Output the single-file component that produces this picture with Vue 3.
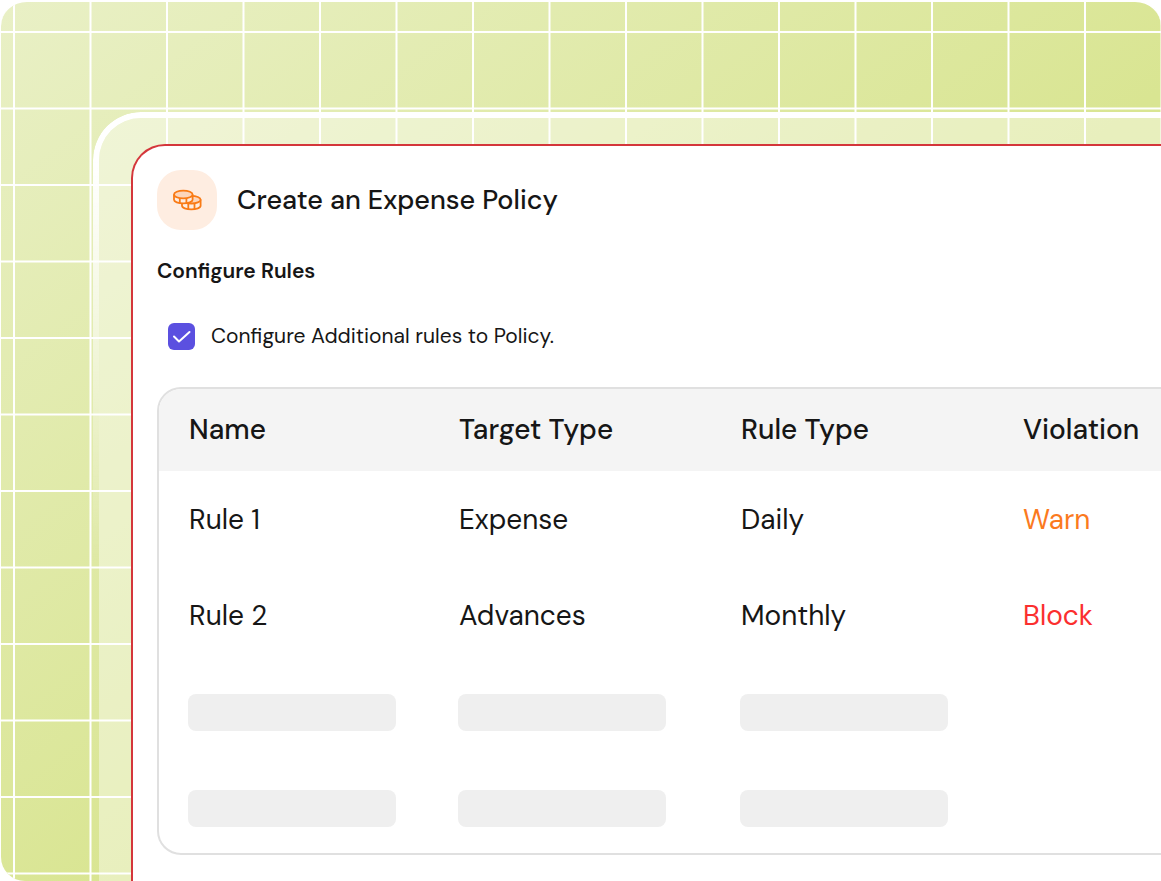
<script setup>
import { ref } from 'vue'

const additional = ref(true)
const columns = ['Name', 'Target Type', 'Rule Type', 'Violation']
const rules = [
  { name: 'Rule 1', target: 'Expense', type: 'Daily', violation: 'Warn', tone: 'warn' },
  { name: 'Rule 2', target: 'Advances', type: 'Monthly', violation: 'Block', tone: 'block' },
]
</script>

<template>
  <main class="stage">
    <svg class="grid" aria-hidden="true">
      <defs>
        <pattern id="lines" x="14" y="32" width="153" height="153" patternUnits="userSpaceOnUse">
          <path d="M0 0V153M76.5 0V153M153 0V153M0 0H153M0 76.5H153M0 153H153" stroke="#fff" stroke-width="2" />
        </pattern>
      </defs>
      <rect width="100%" height="100%" fill="url(#lines)" />
    </svg>
    <div class="glass">
      <section class="card">
        <header class="head">
          <span class="badge">
            <svg width="30" height="22" viewBox="0 0 30 22" fill="none" stroke="#f97b16" stroke-width="1.8" stroke-linejoin="round" aria-hidden="true">
              <path d="M10 10.500v6.300c0 2 4.200 3.500 9.300 3.500s9.300-1.500 9.300-3.500v-6.300" fill="#fdede2" />
              <ellipse cx="19.300" cy="10.700" rx="9.300" ry="3.800" fill="#fcd6bc" />
              <path d="M16.300 15v5M22.500 14.500v5.500" />
              <path d="M2 5.500v5.300c0 2 4.200 3.600 9.300 3.600s9.300-1.600 9.300-3.600V5.500" fill="#fdede2" />
              <path d="M7.800 9v5M14.400 9v5" />
              <ellipse cx="11.300" cy="5.500" rx="9.300" ry="3.900" fill="#fcd6bc" />
            </svg>
          </span>
          <h1>Create an Expense Policy</h1>
        </header>
        <h2>Configure Rules</h2>
        <label class="option">
          <span class="tick">
            <input v-model="additional" type="checkbox" />
            <svg v-if="additional" viewBox="0 0 27 27" aria-hidden="true">
              <path d="M6 13.500l5 5L21.500 9" fill="none" stroke="#fff" stroke-width="2" stroke-linecap="round" stroke-linejoin="round" />
            </svg>
          </span>
          <span>Configure Additional rules to Policy.</span>
        </label>
        <div class="frame">
          <table>
            <colgroup>
              <col class="first" />
              <col class="middle" />
              <col class="middle" />
              <col />
            </colgroup>
            <thead>
              <tr><th v-for="c in columns" :key="c" scope="col">{{ c }}</th></tr>
            </thead>
            <tbody>
              <tr v-for="r in rules" :key="r.name">
                <td>{{ r.name }}</td>
                <td>{{ r.target }}</td>
                <td>{{ r.type }}</td>
                <td :class="r.tone">{{ r.violation }}</td>
              </tr>
              <tr v-for="n in 2" :key="n" class="empty">
                <td v-for="m in 3" :key="m"><div class="bar"></div></td>
                <td></td>
              </tr>
            </tbody>
          </table>
        </div>
      </section>
    </div>
  </main>
</template>

<style>
body { background: #fff; }
</style>

<style scoped>
.stage {
  position: relative;
  display: flex;
  flex-direction: column;
  box-sizing: border-box;
  min-height: 100vh;
  margin-left: 1px;
  padding: 110px 0 0 92px;
  overflow: hidden;
  border-top: 2px solid #fff;
  border-radius: 26px 26px 0 24px;
  background: linear-gradient(to bottom right, #e9f0c6, #d9e592 55%, #d7e38c);
  font-family: "DM Sans", "Open Sans", sans-serif;
  color: #161616;
}
.grid {
  position: absolute;
  inset: -2px 0 0 -1px;
  width: calc(100% + 1px);
  height: calc(100% + 2px);
}
.glass {
  position: relative;
  display: flex;
  flex: 1;
  flex-direction: column;
  padding: 26px 0 0 32px;
  border: solid transparent;
  border-width: 6px 0 0 6px;
  border-radius: 48px 0 0 0;
  background: rgba(255, 255, 255, 0.4) padding-box;
}
/* Rim of the glass panel, fading out down the left side */
.glass::before {
  content: "";
  position: absolute;
  inset: -6px 0 0 -6px;
  padding: 6px 0 0 6px;
  border-radius: 48px 0 0 0;
  background: linear-gradient(#fff 50px, rgba(255, 255, 255, 0) 450px);
  mask: linear-gradient(#000 0 0) content-box exclude, linear-gradient(#000 0 0);
  pointer-events: none;
}
.card {
  position: relative;
  flex: 1;
  padding: 24px 0 26px 24px;
  border: solid #d4363b;
  border-width: 2px 0 0 2px;
  border-radius: 34px 0 0 0;
  background: #fff;
}
.head { display: flex; align-items: center; gap: 20px; }
.badge {
  display: grid;
  place-items: center;
  width: 60px;
  height: 60px;
  border-radius: 24px;
  background: #feede1;
}
h1 { margin: 0; font-size: 27px; line-height: 36px; font-weight: 550; }
h2 { margin: 26px 0 0; font-size: 21px; line-height: 30px; font-weight: 600; }
.option {
  display: flex;
  align-items: center;
  gap: 16px;
  margin: 36px 0 0 11px;
  font-size: 21px;
  line-height: 28px;
}
.tick { display: grid; width: 27px; height: 27px; }
.tick > * { grid-area: 1 / 1; }
.tick input {
  appearance: none;
  width: 27px;
  height: 27px;
  margin: 0;
  border-radius: 6px;
  background: #5b50e0;
}
.tick svg { pointer-events: none; }
.frame {
  margin-top: 37px;
  overflow: hidden;
  border: 2px solid #e0e0e0;
  border-right: 0;
  border-radius: 24px 0 0 24px;
}
table { width: 100%; border-collapse: collapse; table-layout: fixed; }
.first { width: 270px; }
.middle { width: 282px; }
th, td { padding: 0 0 0 30px; text-align: left; font-size: 28px; font-weight: 400; }
th { height: 80px; padding-bottom: 2px; background: #f4f4f4; font-weight: 500; }
td { height: 96px; }
.empty td { padding: 31px 0 0 29px; height: 65px; vertical-align: top; }
.empty:last-child td { height: 63px; }
.warn { color: #fb7a1e; }
.block { color: #fb2f2f; }
.bar { width: 208px; height: 37px; border-radius: 8px; background: #efefef; }
</style>
